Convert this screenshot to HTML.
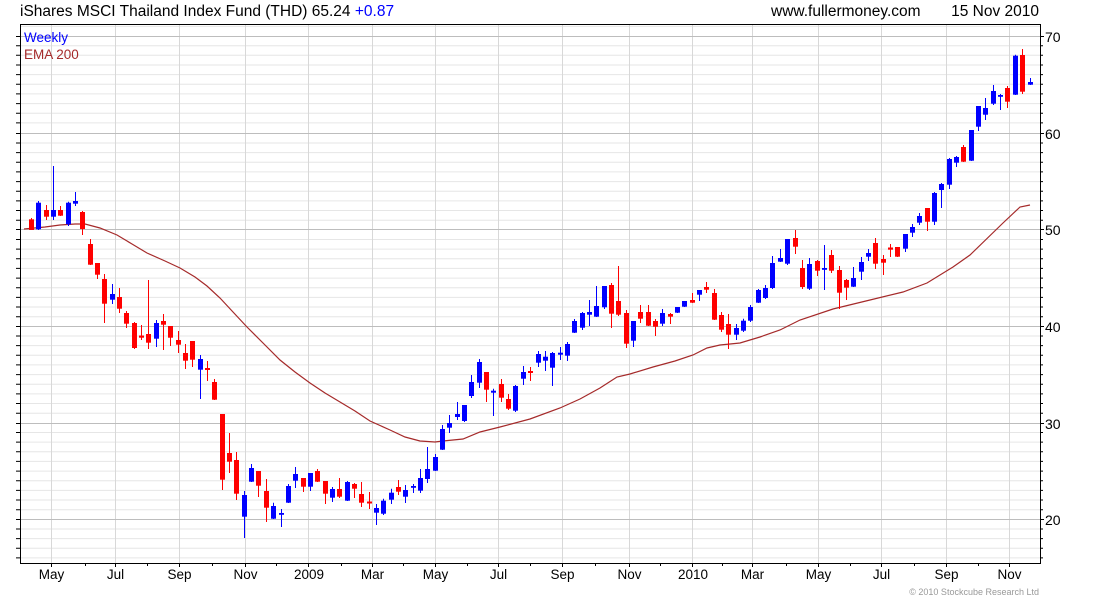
<!DOCTYPE html>
<html><head><meta charset="utf-8"><style>
html,body{margin:0;padding:0;background:#fff;}
svg{display:block;font-family:"Liberation Sans",Arial,sans-serif;}
</style></head><body>
<svg width="1100" height="600" viewBox="0 0 1100 600" xmlns="http://www.w3.org/2000/svg">
<rect width="1100" height="600" fill="#fff"/>
<g stroke="#e6e6e6" stroke-width="1">
<path d="M20 45.7H1040M20 55.3H1040M20 65H1040M20 74.6H1040M20 84.3H1040M20 93.9H1040M20 103.6H1040M20 113.2H1040M20 122.9H1040
M20 143H1040M20 152.6H1040M20 162.3H1040M20 171.9H1040M20 181.6H1040M20 191.2H1040M20 200.9H1040M20 210.5H1040M20 220.2H1040
M20 239.5H1040M20 249.1H1040M20 258.8H1040M20 268.4H1040M20 278.1H1040M20 287.7H1040M20 297.4H1040M20 307H1040M20 316.7H1040
M20 336H1040M20 345.6H1040M20 355.3H1040M20 364.9H1040M20 374.6H1040M20 384.2H1040M20 393.9H1040M20 403.5H1040M20 413.2H1040
M20 432.5H1040M20 442.1H1040M20 451.8H1040M20 461.4H1040M20 471.1H1040M20 480.7H1040M20 490.4H1040M20 500H1040M20 509.7H1040
M20 529H1040M20 538.6H1040M20 548.3H1040M20 557.9H1040M20 26.4H1040"/>
</g>
<g stroke="#d8d8d8" stroke-width="1">
<path d="M51.5 24V563M115.5 24V563M179.5 24V563M245.5 24V563M308.5 24V563M372.5 24V563M435.5 24V563M498.5 24V563M562.5 24V563M629.5 24V563M692.5 24V563M752.5 24V563M818.5 24V563M881.5 24V563M946.5 24V563M1009.5 24V563"/>
</g>
<g stroke="#bdbdbd" stroke-width="1">
<path d="M20 36.5H1040M20 133.5H1040M20 229.5H1040M20 326.5H1040M20 423.5H1040M20 519.5H1040"/>
</g>
<g stroke="#000" stroke-width="1">
<path d="M16 36.5H20M16 45.7H20M16 55.3H20M16 65H20M16 74.6H20M16 84.3H20M16 93.9H20M16 103.6H20M16 113.2H20M16 122.9H20M16 133.5H20M16 143H20M16 152.6H20M16 162.3H20M16 171.9H20M16 181.6H20M16 191.2H20M16 200.9H20M16 210.5H20M16 220.2H20M16 229.5H20M16 239.5H20M16 249.1H20M16 258.8H20M16 268.4H20M16 278.1H20M16 287.7H20M16 297.4H20M16 307H20M16 316.7H20M16 326.5H20M16 336H20M16 345.6H20M16 355.3H20M16 364.9H20M16 374.6H20M16 384.2H20M16 393.9H20M16 403.5H20M16 413.2H20M16 423.5H20M16 432.5H20M16 442.1H20M16 451.8H20M16 461.4H20M16 471.1H20M16 480.7H20M16 490.4H20M16 500H20M16 509.7H20M16 519.5H20M16 529H20M16 538.6H20M16 548.3H20M16 557.9H20"/>
<path d="M1040 36.5H1044M1040 45.7H1043M1040 55.3H1043M1040 65H1043M1040 74.6H1043M1040 84.3H1043M1040 93.9H1043M1040 103.6H1043M1040 113.2H1043M1040 122.9H1043M1040 133.5H1044M1040 143H1043M1040 152.6H1043M1040 162.3H1043M1040 171.9H1043M1040 181.6H1043M1040 191.2H1043M1040 200.9H1043M1040 210.5H1043M1040 220.2H1043M1040 229.5H1044M1040 239.5H1043M1040 249.1H1043M1040 258.8H1043M1040 268.4H1043M1040 278.1H1043M1040 287.7H1043M1040 297.4H1043M1040 307H1043M1040 316.7H1043M1040 326.5H1044M1040 336H1043M1040 345.6H1043M1040 355.3H1043M1040 364.9H1043M1040 374.6H1043M1040 384.2H1043M1040 393.9H1043M1040 403.5H1043M1040 413.2H1043M1040 423.5H1044M1040 432.5H1043M1040 442.1H1043M1040 451.8H1043M1040 461.4H1043M1040 471.1H1043M1040 480.7H1043M1040 490.4H1043M1040 500H1043M1040 509.7H1043M1040 519.5H1044M1040 529H1043M1040 538.6H1043M1040 548.3H1043M1040 557.9H1043"/>
<path d="M51.5 563V567M85.5 563V566M115.5 563V567M147.5 563V566M179.5 563V567M212.5 563V566M245.5 563V567M276.5 563V566M308.5 563V567M341.5 563V566M372.5 563V567M403.5 563V566M435.5 563V567M467.5 563V566M498.5 563V567M530.5 563V566M562.5 563V567M595.5 563V566M629.5 563V567M660.5 563V566M692.5 563V567M722.5 563V566M752.5 563V567M786.5 563V566M818.5 563V567M850.5 563V566M881.5 563V567M914.5 563V566M946.5 563V567M978.5 563V566M1009.5 563V567"/>
</g>
<path d="M20.5 24V563.5H1040.5V24M20 24.5H1040" fill="none" stroke="#000" stroke-width="1"/>

<polyline fill="none" stroke="#a52a2a" stroke-width="1.2" points="24,229 45,227 60,225 75,224 85,224 100,228 117,235 132,244 147,253 165,261 180,268 195,277 207,286 220,298 233,312 247,327 263,343 280,360 295,372 310,383 325,393 340,402 355,411 370,421 390,430 405,437 420,441 435,442 443,441 463,439 480,432 500,427 530,419 560,408 580,399 600,388 617,377 630,374 653,367 675,361 693,355 707,348 720,345 740,343 760,337 780,330 800,320 833,309 870,300 903,292 927,283 953,267 970,255 1003,223 1020,207 1030,205"/>

<g fill="#ff0000" stroke="#ff0000" stroke-width="1">
<path fill="none" d="M31.5 218V230M46.5 205V220M60.5 206V216M82.5 211V235M90.5 239V265M97.5 263V279M104.5 274V323M119.5 288V313M126.5 311V328M134.5 322V349M141.5 325V340M148.5 280V349M163.5 314V350M170.5 326V346M178.5 331V353M185.5 344V369M192.5 341V367M207.5 361V381M214.5 379V400M222.5 414V490M229.5 433V473M236.5 452V500M258.5 471V497M266.5 479V522M303.5 478V492M317.5 469V482M325.5 481V504M339.5 478V498M354.5 483V498M361.5 482V507M369.5 492V509M398.5 480V495M486.5 372V402M501.5 379V402M508.5 394V410M530.5 367V381M611.5 283V328M618.5 266V316M626.5 310V348M640.5 305V323M648.5 305V326M655.5 319V336M670.5 313V324M692.5 293V303M706.5 282V293M714.5 289V320M721.5 312V332M728.5 314V349M795.5 230V254M802.5 260V289M817.5 260V276M831.5 250V273M839.5 266V309M846.5 279V300M875.5 238V269M883.5 255V275M890.5 244V257M897.5 247V257M927.5 208V231M963.5 145V162M1007.5 86V108M1022.5 49V94"/>
<g stroke="none">
<rect x="29" y="219.3" width="5" height="10.7"/><rect x="44" y="210" width="5" height="6.7"/><rect x="58" y="210" width="5" height="5.7"/>
<rect x="80" y="212" width="5" height="17"/><rect x="88" y="244" width="5" height="20.7"/><rect x="95" y="263" width="5" height="11.7"/>
<rect x="102" y="279" width="5" height="24.7"/><rect x="117" y="297" width="5" height="11.7"/><rect x="124" y="313" width="5" height="10.7"/>
<rect x="132" y="323" width="5" height="25"/><rect x="139" y="335.5" width="5" height="2.2"/><rect x="146" y="334" width="5" height="8.7"/>
<rect x="161" y="321" width="5" height="3.7"/><rect x="168" y="326" width="5" height="11.7"/><rect x="176" y="340" width="5" height="4.7"/>
<rect x="183" y="353" width="5" height="7.7"/><rect x="190" y="341" width="5" height="18.7"/><rect x="205" y="368" width="5" height="2"/>
<rect x="212" y="382" width="5" height="17.7"/><rect x="220" y="414" width="5" height="65.7"/><rect x="227" y="453" width="5" height="8.7"/>
<rect x="234" y="460" width="5" height="33.7"/><rect x="256" y="471" width="5" height="14.7"/><rect x="264" y="491" width="5" height="16.7"/>
<rect x="301" y="478" width="5" height="8.7"/><rect x="315" y="471" width="5" height="10.7"/><rect x="323" y="481" width="5" height="12.7"/>
<rect x="337" y="489" width="5" height="7.7"/><rect x="352" y="484" width="5" height="4.7"/><rect x="359" y="494" width="5" height="8.7"/>
<rect x="367" y="501.5" width="5" height="2"/><rect x="396" y="487" width="5" height="4.7"/><rect x="484" y="372" width="5" height="17.7"/>
<rect x="499" y="384" width="5" height="13.7"/><rect x="506" y="399" width="5" height="9.7"/><rect x="528" y="371" width="5" height="2"/>
<rect x="609" y="285" width="5" height="28.7"/><rect x="616" y="301" width="5" height="13.7"/><rect x="624" y="313" width="5" height="30.7"/>
<rect x="638" y="312" width="5" height="6.7"/><rect x="646" y="312" width="5" height="13.7"/><rect x="653" y="321" width="5" height="5.7"/>
<rect x="668" y="314" width="5" height="2.7"/><rect x="690" y="300" width="5" height="2.7"/><rect x="704" y="287" width="5" height="2.7"/>
<rect x="712" y="293" width="5" height="26.7"/><rect x="719" y="315" width="5" height="14.7"/><rect x="726" y="324" width="5" height="10.7"/>
<rect x="793" y="238" width="5" height="8.7"/><rect x="800" y="268" width="5" height="19"/><rect x="815" y="261" width="5" height="9.7"/>
<rect x="829" y="255" width="5" height="15.7"/><rect x="837" y="270" width="5" height="22.7"/><rect x="844" y="280" width="5" height="7.7"/>
<rect x="873" y="243" width="5" height="20.7"/><rect x="881" y="259" width="5" height="3.7"/><rect x="888" y="247.5" width="5" height="2.2"/>
<rect x="895" y="247" width="5" height="9.7"/><rect x="925" y="208" width="5" height="13.7"/><rect x="961" y="147" width="5" height="14.7"/>
<rect x="1005" y="88" width="5" height="13.7"/><rect x="1020" y="55" width="5" height="36.7"/>
</g></g>

<g fill="#0000ff" stroke="#0000ff" stroke-width="1">
<path fill="none" d="M38.5 201V230M53.5 166V220M68.5 201.7V226M75.5 192V206M112.5 284V304M156.5 320V347M200.5 355V399M244.5 491V538M251.5 464V482M273.5 502.7V519M281.5 509V527M288.5 484V503M295.5 467V488M310.5 473V491M332.5 487V502M347.5 481V501M376.5 504V525M383.5 498.7V515M391.5 488.7V504M405.5 485V503M413.5 484V493M420.5 469V493M427.5 447V483M435.5 454V471M442.5 425V450M449.5 415V433M457.5 402V420M464.5 405V422M471.5 375V398M479.5 359V388M493.5 388.7V416M515.5 385V412M523.5 366V385M538.5 351V367M545.5 351V371M552.5 352V386M560.5 347V360M567.5 342V361M574.5 319V333M582.5 312V330M589.5 300V326M596.5 286V317M604.5 286V309M633.5 321V347M662.5 309V326M677.5 307V313M684.5 301V307M699.5 290V301M736.5 324V340M743.5 318.7V332M750.5 305V322M758.5 289V303M765.5 285V299M772.5 256V289M780.5 249V262M787.5 239V265M809.5 258V290M824.5 245V290M853.5 267V287M861.5 257V280M868.5 249V261M905.5 234V252M912.5 224V237M919.5 213V225M934.5 192V225M941.5 183V208M949.5 158V189M956.5 156V167M971.5 130V161M978.5 106V131M985.5 98V120M993.5 85V105M1000.5 94V110M1015.5 54.7V95M1030.5 78V85"/>
<g stroke="none">
<rect x="36" y="202.7" width="5" height="26.6"/><rect x="51" y="210" width="5" height="6.7"/><rect x="66" y="202.7" width="5" height="21.6"/>
<rect x="73" y="201" width="5" height="2.7"/><rect x="110" y="294" width="5" height="5.7"/><rect x="154" y="323" width="5" height="15.7"/>
<rect x="198" y="359" width="5" height="10.7"/><rect x="242" y="495" width="5" height="21.7"/><rect x="249" y="468" width="5" height="13.7"/>
<rect x="271" y="506" width="5" height="12.7"/><rect x="279" y="513" width="5" height="1.8"/><rect x="286" y="486" width="5" height="16.7"/>
<rect x="293" y="474" width="5" height="6.7"/><rect x="308" y="473" width="5" height="13.7"/><rect x="330" y="489" width="5" height="8.7"/>
<rect x="345" y="482" width="5" height="18.7"/><rect x="374" y="508" width="5" height="4.7"/><rect x="381" y="500.7" width="5" height="13"/>
<rect x="389" y="492.7" width="5" height="7"/><rect x="403" y="490" width="5" height="6.7"/><rect x="411" y="486" width="5" height="1.8"/>
<rect x="418" y="478" width="5" height="12.7"/><rect x="425" y="469" width="5" height="10"/><rect x="433" y="457" width="5" height="13.7"/>
<rect x="440" y="429" width="5" height="20.7"/><rect x="447" y="423" width="5" height="4.7"/><rect x="455" y="414" width="5" height="3"/>
<rect x="462" y="405" width="5" height="16"/><rect x="469" y="382" width="5" height="14"/><rect x="477" y="362" width="5" height="20.7"/>
<rect x="491" y="390.7" width="5" height="2"/><rect x="513" y="386" width="5" height="24.7"/><rect x="521" y="372" width="5" height="6.7"/>
<rect x="536" y="354" width="5" height="8.7"/><rect x="543" y="356.7" width="5" height="4"/><rect x="550" y="353" width="5" height="14.7"/>
<rect x="558" y="352.7" width="5" height="2"/><rect x="565" y="344" width="5" height="11.7"/><rect x="572" y="321" width="5" height="11.7"/>
<rect x="580" y="313" width="5" height="14.7"/><rect x="587" y="312" width="5" height="2.7"/><rect x="594" y="306" width="5" height="10.7"/>
<rect x="602" y="286" width="5" height="21.3"/><rect x="631" y="321" width="5" height="19.7"/><rect x="660" y="313" width="5" height="10.7"/>
<rect x="675" y="307" width="5" height="5.7"/><rect x="682" y="301" width="5" height="5.7"/><rect x="697" y="290" width="5" height="4.7"/>
<rect x="734" y="328" width="5" height="6.7"/><rect x="741" y="320.7" width="5" height="10"/><rect x="748" y="307" width="5" height="13.7"/>
<rect x="756" y="290" width="5" height="12.7"/><rect x="763" y="288" width="5" height="10"/><rect x="770" y="263" width="5" height="25"/>
<rect x="778" y="258" width="5" height="3.7"/><rect x="785" y="239" width="5" height="24.7"/><rect x="807" y="264" width="5" height="24.7"/>
<rect x="822" y="268" width="5" height="1.8"/><rect x="851" y="278" width="5" height="8.7"/><rect x="859" y="262" width="5" height="9.7"/>
<rect x="866" y="253" width="5" height="3.7"/><rect x="903" y="234" width="5" height="14.7"/><rect x="910" y="227" width="5" height="5.7"/>
<rect x="917" y="216" width="5" height="6.7"/><rect x="932" y="193" width="5" height="28.7"/><rect x="939" y="184" width="5" height="6"/>
<rect x="947" y="159" width="5" height="25.7"/><rect x="954" y="157" width="5" height="5.7"/><rect x="969" y="130" width="5" height="30.7"/>
<rect x="976" y="106" width="5" height="20.7"/><rect x="983" y="108" width="5" height="6.7"/><rect x="991" y="91" width="5" height="12.7"/>
<rect x="998" y="95" width="5" height="1.8"/><rect x="1013" y="55.7" width="5" height="39"/><rect x="1028" y="82" width="5" height="2.7"/>
</g></g>

<text x="20" y="16" font-size="15.5" fill="#000">iShares MSCI Thailand Index Fund (THD) 65.24 <tspan fill="#0000ff">+0.87</tspan></text>
<text x="771" y="16" font-size="15.5" fill="#000">www.fullermoney.com</text>
<text x="1039" y="16" font-size="15.5" fill="#000" text-anchor="end">15 Nov 2010</text>
<text x="24" y="42" font-size="13.5" fill="#0000ff">Weekly</text>
<text x="24" y="59" font-size="13.5" fill="#a52a2a">EMA 200</text>
<g font-size="14" fill="#000">
<text x="1045" y="42">70</text><text x="1045" y="139">60</text><text x="1045" y="235">50</text>
<text x="1045" y="332">40</text><text x="1045" y="429">30</text><text x="1045" y="525">20</text>
</g>
<g font-size="13.5" fill="#000" text-anchor="middle">
<text x="51.5" y="579">May</text><text x="115.5" y="579">Jul</text><text x="179.5" y="579">Sep</text><text x="245.5" y="579">Nov</text>
<text x="309" y="579">2009</text><text x="372.5" y="579">Mar</text><text x="435.5" y="579">May</text><text x="498.5" y="579">Jul</text>
<text x="562.5" y="579">Sep</text><text x="629.5" y="579">Nov</text><text x="693" y="579">2010</text><text x="752.5" y="579">Mar</text>
<text x="818.5" y="579">May</text><text x="881.5" y="579">Jul</text><text x="946.5" y="579">Sep</text><text x="1009.5" y="579">Nov</text>
</g>
<text x="1039" y="595" font-size="9" fill="#999" text-anchor="end">© 2010 Stockcube Research Ltd</text>
</svg>
</body></html>
